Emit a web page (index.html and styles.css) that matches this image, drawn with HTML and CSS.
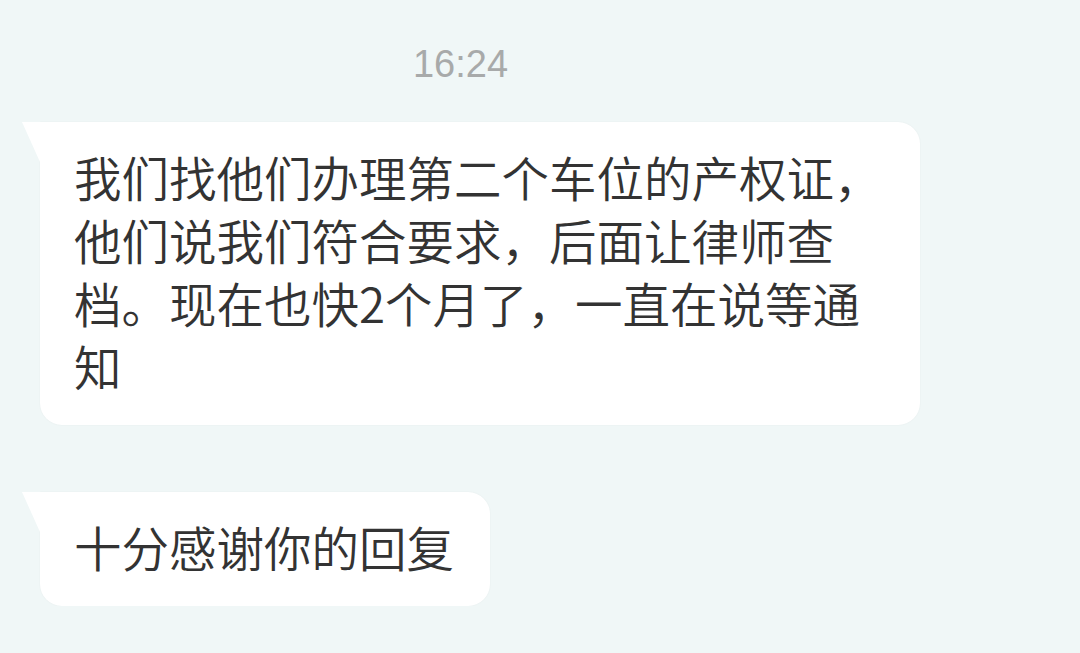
FILE: index.html
```
<!DOCTYPE html>
<html lang="zh-CN">
<head>
  <meta charset="UTF-8" />
  <meta name="viewport" content="width=device-width, initial-scale=1.0" />
  <title>聊天记录</title>
  <link rel="stylesheet" href="styles.css">
</head>
<body>

<!-- 💬 聊天 -->
<div class="chat">
  <div class="time">16:24</div>

  <div class="msg">
    <div class="bubble">我们找他们办理第二个车位的产权证，他们说我们符合要求，后面让律师查档。现在也快2个月了，一直在说等通知</div>
  </div>

  <div class="msg">
    <div class="bubble">十分感谢你的回复</div>
  </div>
</div>

</body>
</html>
```

FILE: styles.css
```
* { box-sizing: border-box; }
body {
  margin: 0;
  background: #f0f7f7;
  font-family: "Noto Sans CJK SC", "Noto Sans", sans-serif;
  color: #333;
  overflow: hidden;
}

.chat {
  width: 921px;
  display: flex;
  flex-direction: column;
  gap: 67px;
}

.time {
  padding-top: 42px;
  margin-bottom: -31px;
  text-align: center;
  font-family: "Liberation Sans", Arial, sans-serif;
  font-size: 38px;
  line-height: 44px;
  color: #a8aaaa;
}

.msg {
  display: flex;
  padding-left: 40px;
}

.bubble {
  position: relative;
  max-width: 880px;
  background: #fff;
  border-radius: 0 22px 22px 22px;
  padding: 23px 36px 28px 34px;
  font-size: 47.5px;
  font-weight: 350;
  line-height: 63px;
  box-shadow: 0 0 2px rgba(0, 0, 0, 0.05);
}

/* 小尾巴 */
.bubble::before {
  content: "";
  position: absolute;
  top: 0;
  left: -18px;
  width: 18px;
  height: 40px;
  background: #fff;
  clip-path: polygon(0 0, 100% 0, 100% 100%);
}
```
